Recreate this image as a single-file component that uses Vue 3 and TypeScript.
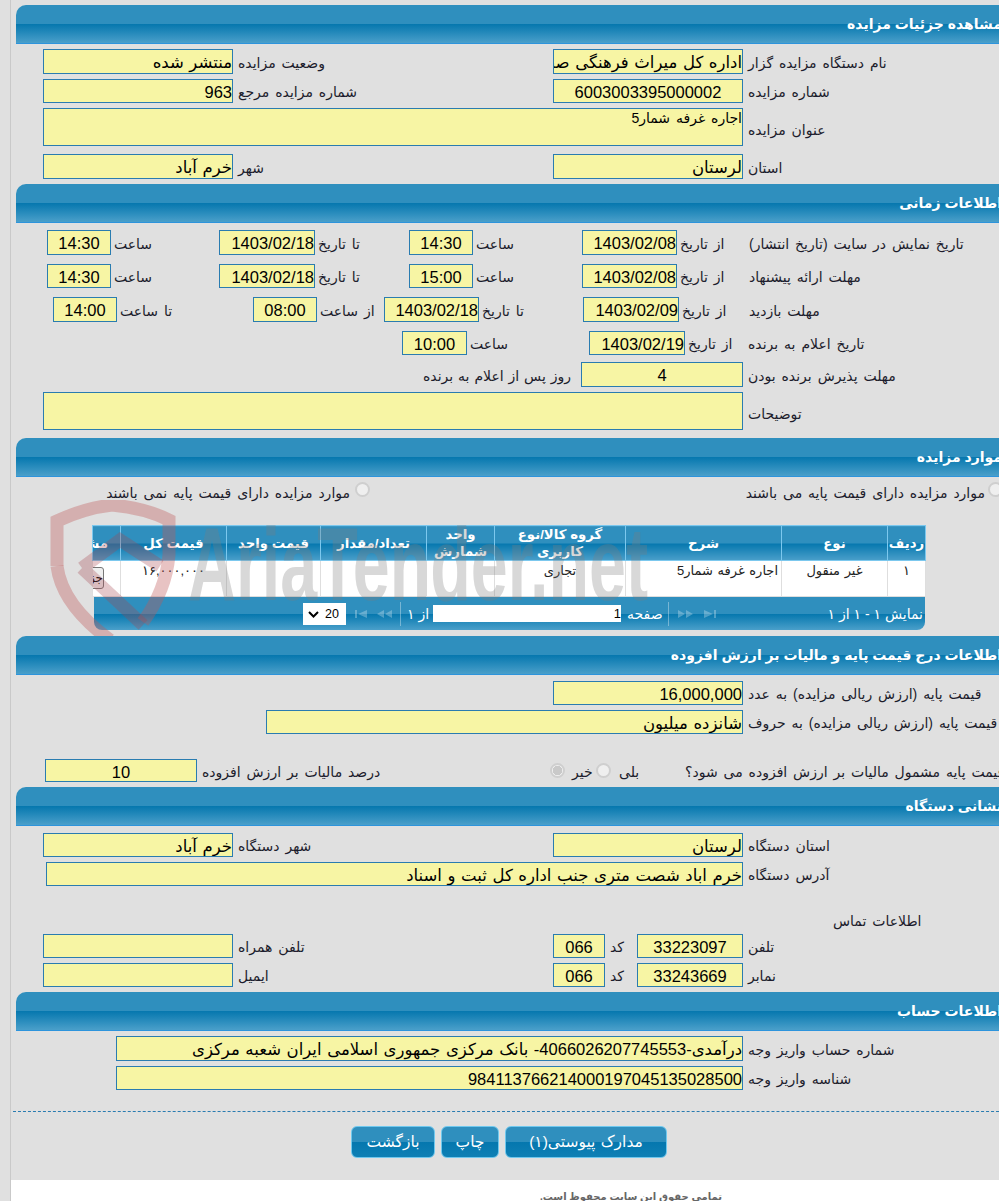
<script setup lang="ts">
const cols = [38, 106, 156, 131, 68, 106, 94, 106, 28]
const heads = ['ردیف', 'نوع', 'شرح', 'گروه کالا/نوع کاربری', 'واحد شمارش', 'تعداد/مقدار', 'قیمت واحد', 'قیمت کل', 'مشاهده']
</script>

<template>
  <div class="page">
    <div class="inner">
      <h2 class="bar">مشاهده جزئیات مزایده</h2>
      <div class="row g2 mt5 h25">
        <div class="f">منتشر شده</div><div class="lb lb5">وضعیت مزایده</div>
        <div class="f">اداره کل میراث فرهنگی  صنایع دستی و گردشگری لرستان</div><div class="lb lb5">نام دستگاه مزایده گزار</div>
      </div>
      <div class="row g2 mt5 h24">
        <div class="f">963</div><div class="lb lb5">شماره مزایده مرجع</div>
        <div class="f c">6003003395000002</div><div class="lb lb5">شماره مزایده</div>
      </div>
      <div class="row gw mt5 h38">
        <div class="f ta">اجاره غرفه شمار5</div><div class="lb lb5 low">عنوان مزایده</div>
      </div>
      <div class="row g2 mt8 h25">
        <div class="f">خرم آباد</div><div class="lb lb5">شهر</div>
        <div class="f">لرستان</div><div class="lb lb5">استان</div>
      </div>

      <h2 class="bar mt5">اطلاعات زمانی</h2>
      <div class="row ga mt7 h25">
        <div class="f c">14:30</div><div class="lb">ساعت</div>
        <div class="f">1403/02/18</div><div class="lb">تا تاریخ</div>
        <div class="f c">14:30</div><div class="lb">ساعت</div>
        <div class="f">1403/02/08</div><div class="lb">از تاریخ</div>
        <div class="lb">تاریخ نمایش در سایت (تاریخ انتشار)</div>
      </div>
      <div class="row ga mt9 h24">
        <div class="f c">14:30</div><div class="lb">ساعت</div>
        <div class="f">1403/02/18</div><div class="lb">تا تاریخ</div>
        <div class="f c">15:00</div><div class="lb">ساعت</div>
        <div class="f">1403/02/08</div><div class="lb">از تاریخ</div>
        <div class="lb">مهلت ارائه پیشنهاد</div>
      </div>
      <div class="row gb mt9 h25">
        <div class="f c">14:00</div><div class="lb">تا ساعت</div>
        <div class="f c">08:00</div><div class="lb">از ساعت</div>
        <div class="f">1403/02/18</div><div class="lb">تا تاریخ</div>
        <div class="f">1403/02/09</div><div class="lb">از تاریخ</div>
        <div class="lb">مهلت بازدید</div>
      </div>
      <div class="row gc mt9 h24">
        <div class="f c">10:00</div><div class="lb">ساعت</div>
        <div class="f">1403/02/19</div><div class="lb">از تاریخ</div>
        <div class="lb">تاریخ اعلام به برنده</div>
      </div>
      <div class="row gd mt7 h25">
        <div class="lb end">روز پس از اعلام به برنده</div>
        <div class="f c">4</div><div class="lb lb5">مهلت پذیرش برنده بودن</div>
      </div>
      <div class="row gw mt5 h38">
        <div class="f ta"></div><div class="lb lb5 low">توضیحات</div>
      </div>

      <h2 class="bar mt8">موارد مزایده</h2>
      <div class="opts">
        <label class="opt"><span class="lb ot1">موارد مزایده دارای قیمت پایه نمی باشند</span><input class="rd" type="radio" disabled /></label>
        <label class="opt"><span class="lb ot2">موارد مزایده دارای قیمت پایه می باشند</span><input class="rd" type="radio" disabled /></label>
      </div>

      <table class="grid" dir="rtl">
        <colgroup><col v-for="(w, i) in cols" :key="i" :width="w" /></colgroup>
        <thead>
          <tr><th v-for="h in heads" :key="h">{{ h }}</th></tr>
        </thead>
        <tbody>
          <tr>
            <td>۱</td>
            <td>غیر منقول</td>
            <td class="start">اجاره غرفه شمار5</td>
            <td>تجاری</td>
            <td></td>
            <td></td>
            <td></td>
            <td class="num">۱۶,۰۰۰,۰۰۰</td>
            <td class="clip"><button class="more" type="button">جزئیات</button></td>
          </tr>
        </tbody>
      </table>
      <div class="pager">
        <div class="size-box">
          <select class="size" dir="rtl"><option>20</option></select>
          <svg class="chev" width="11" height="7" viewBox="0 0 11 7"><path d="M1 1l4.5 4.5L10 1" /></svg>
        </div>
        <svg class="pi first" width="12" height="10" viewBox="0 0 12 10"><path d="M0 1h2v8H0zM12 1v8L3 5z" /></svg>
        <svg class="pi prev" width="15" height="10" viewBox="0 0 15 10"><path d="M7 1v8L0 5zM15 1v8L8 5z" /></svg>
        <span class="sep s1"></span>
        <span class="pt of">از ۱</span>
        <input class="page-no" dir="rtl" value="1" readonly />
        <span class="pt word">صفحه</span>
        <span class="sep s2"></span>
        <svg class="pi next" width="15" height="10" viewBox="0 0 15 10"><path d="M0 1v8l7-4zM8 1v8l7-4z" /></svg>
        <svg class="pi last" width="12" height="10" viewBox="0 0 12 10"><path d="M0 1v8l9-4zM10 1h2v8h-2z" /></svg>
        <span class="pt info">نمایش ۱ - ۱ از ۱</span>
      </div>

      <h2 class="bar mt6">اطلاعات درج قیمت پایه و مالیات بر ارزش افزوده</h2>
      <div class="row gf mt6 h24">
        <div class="f">16,000,000</div><div class="lb lb5">قیمت پایه (ارزش ریالی مزایده) به عدد</div>
      </div>
      <div class="row gg mt5 h24">
        <div class="f">شانزده میلیون</div><div class="lb lb5">قیمت پایه (ارزش ریالی مزایده) به حروف</div>
      </div>
      <div class="row gh mt25 h23">
        <div class="f c">10</div><div class="lb lb5">درصد مالیات بر ارزش افزوده</div>
        <input class="rd" type="radio" checked disabled /><div class="lb lb7">خیر</div>
        <input class="rd" type="radio" disabled /><div class="lb lb8">بلی</div>
        <div class="lb">قیمت پایه مشمول مالیات بر ارزش افزوده می شود؟</div>
      </div>

      <h2 class="bar mt5">نشانی دستگاه</h2>
      <div class="row g2 mt7 h24">
        <div class="f">خرم آباد</div><div class="lb lb5">شهر دستگاه</div>
        <div class="f">لرستان</div><div class="lb lb5">استان دستگاه</div>
      </div>
      <div class="row gi mt5 h24">
        <div class="f">خرم اباد شصت متری جنب اداره کل ثبت و اسناد</div><div class="lb lb5">آدرس دستگاه</div>
      </div>
      <div class="row gj mt24 h20"><div class="lb">اطلاعات تماس</div></div>
      <div class="row gk mt4 h24">
        <div class="f"></div><div class="lb lb5">تلفن همراه</div>
        <div class="f c">066</div><div class="lb lb5">کد</div>
        <div class="f c">33223097</div><div class="lb lb5">تلفن</div>
      </div>
      <div class="row gk mt5 h24">
        <div class="f"></div><div class="lb lb5">ایمیل</div>
        <div class="f c">066</div><div class="lb lb5">کد</div>
        <div class="f c">33243669</div><div class="lb lb5">نمابر</div>
      </div>

      <h2 class="bar mt5">اطلاعات حساب</h2>
      <div class="row gl mt5 h25">
        <div class="f">درآمدی-4066026207745553- بانک مرکزی جمهوری اسلامی ایران شعبه مرکزی</div><div class="lb lb5">شماره حساب واریز وجه</div>
      </div>
      <div class="row gl mt5 h24">
        <div class="f">984113766214000197045135028500</div><div class="lb lb5">شناسه واریز وجه</div>
      </div>

      <div class="dash"></div>
      <div class="btns">
        <button class="btn b1" type="button">بازگشت</button>
        <button class="btn b2" type="button">چاپ</button>
        <button class="btn b3" type="button">مدارک پیوستی(۱)</button>
      </div>
      <div class="foot">تمامی حقوق این سایت محفوظ است.</div>
    </div>

    <svg class="mark" width="630" height="136" viewBox="0 0 630 136" aria-hidden="true">
      <path class="sh" d="M27 66 V21 Q55 8 82 5 Q115 8 139 20 V55 Q136 90 113 122" />
      <path class="sh" d="M27 66 Q32 105 80 140" />
      <path class="vv" d="M52 68 L90 40 L130 66 M52 68 L113 125" />
      <text class="wm" x="158" y="100" textLength="460" lengthAdjust="spacingAndGlyphs">AriaTender.net</text>
    </svg>
  </div>
</template>

<style scoped>
.page {
  position: relative;
  width: 999px;
  height: 1201px;
  overflow: hidden;
  padding: 5px 0 0 10px;
  box-sizing: border-box;
  background: #e0e0e0;
  font-family: "Liberation Sans", "DejaVu Sans", sans-serif;
  color: #1c1c2c;
}
.inner {
  border-left: 1px solid #c9c9c9;
  padding-left: 5px;
  margin-top: -5px;
  padding-top: 5px;
  height: 1201px;
}
.bar {
  margin: 0 -20px 0 0;
  height: 39px;
  box-sizing: border-box;
  padding: 0 17px 0 0;
  direction: rtl;
  text-align: right;
  font-size: 14px;
  line-height: 38px;
  font-weight: bold;
  color: #fff;
  white-space: nowrap;
  border-top-left-radius: 10px;
  border-bottom: 1px solid #2d94dc;
  background: linear-gradient(#2f8fbe 0, #2f8fbe 19px, #0577ae 19px, #4a9fca 38px);
}
.row {
  display: grid;
  align-items: center;
}
.row > .f { height: 100%; }
.mt4 { margin-top: 4px; }
.mt5 { margin-top: 5px; }
.mt6 { margin-top: 6px; }
.mt7 { margin-top: 7px; }
.mt8 { margin-top: 8px; }
.mt9 { margin-top: 9px; }
.mt24 { margin-top: 24px; }
.mt25 { margin-top: 25px; }
.h20 { height: 20px; }
.h23 { height: 23px; }
.h24 { height: 24px; }
.h25 { height: 25px; }
.h38 { height: 38px; }

.g2 { padding-left: 27px; grid-template-columns: 190px 320px 190px 1fr; }
.gw { padding-left: 27px; grid-template-columns: 700px 1fr; }
.ga { padding-left: 31px; grid-template-columns: 64px 108px 96px 94px 64px 109px 95px 69px 1fr; }
.gb { padding-left: 37px; grid-template-columns: 64px 136px 64px 67px 95px 104px 96px 67px 1fr; }
.gc { padding-left: 386px; grid-template-columns: 65px 122px 96px 60px 1fr; }
.gd { padding-left: 27px; grid-template-columns: 538px 162px 1fr; }
.gf { padding-left: 537px; grid-template-columns: 190px 1fr; }
.gg { padding-left: 250px; grid-template-columns: 477px 1fr; }
.gh { padding-left: 29px; margin-right: -60px; grid-template-columns: 152px 353px 15px 31px 15px 71px 1fr; }
.gi { padding-left: 30px; grid-template-columns: 697px 1fr; }
.gj { padding-left: 814px; grid-template-columns: 1fr; }
.gk { padding-left: 27px; grid-template-columns: 190px 320px 52px 32px 106px 1fr; }
.gl { padding-left: 100px; grid-template-columns: 627px 1fr; }

.f {
  box-sizing: border-box;
  min-width: 0;
  overflow: hidden;
  border: 1px solid #2a7cb0;
  background: #f7f5a4;
  direction: rtl;
  text-align: right;
  white-space: pre;
  font-size: 16.5px;
  word-spacing: 1px;
  line-height: 24px;
  color: #000;
}
.f.c { text-align: center; }
.f.ta { font-size: 14px; word-spacing: 2px; line-height: 18px; white-space: normal; }
.lb {
  display: block;
  min-width: 0;
  padding-left: 3px;
  direction: rtl;
  text-align: left;
  white-space: nowrap;
  font-size: 14px;
  word-spacing: 2px;
  line-height: 20px;
  position: relative;
  top: 1px;
}
.lb5 { padding-left: 5px; }
.lb7 { padding-left: 7px; }
.lb8 { padding-left: 8px; }
.low { top: 3px; }
.lb.end { text-align: right; padding: 0 10px 0 0; word-spacing: 1px; }

.opts {
  display: flex;
  height: 20px;
  margin-top: 5px;
  padding-left: 85px;
}
.opt {
  display: flex;
  align-items: flex-start;
  line-height: 20px;
  flex: none;
}
.opt:first-child { width: 640px; }
.ot1 { width: 251px; box-sizing: border-box; padding: 0 2px 0 0; text-align: right; }
.ot2 { width: 244px; box-sizing: border-box; padding: 0; text-align: right; }
.rd {
  appearance: none;
  box-sizing: border-box;
  flex: none;
  width: 15px;
  height: 15px;
  margin: 0 0 0 3px;
  border: 2px solid #cfcfcf;
  border-radius: 50%;
  background: #efefef;
}
.row > .rd { margin: 0; }
.rd:checked { background: radial-gradient(circle, #c9c9c9 0 4.5px, #efefef 5px); }

.grid {
  display: table;
  table-layout: fixed;
  border-collapse: collapse;
  width: 833px;
  margin: 23px 0 0 76px;
  border: 1px solid #8acbea;
  background: #fff;
}
.grid th {
  box-sizing: border-box;
  height: 35px;
  padding: 0;
  overflow: hidden;
  white-space: normal;
  font-size: 13.3px;
  line-height: 17px;
  color: #fff;
  border: 1px solid #7cc8ee;
  background: linear-gradient(#2f8fbe 0, #2f8fbe 17px, #0577ae 17px, #4a9fca 34px);
}
.grid th:last-child { white-space: nowrap; text-align: right; padding-right: 12px; }
.grid td {
  box-sizing: border-box;
  height: 36px;
  padding: 2px 0 0;
  vertical-align: top;
  text-align: center;
  font-size: 13px;
  word-spacing: 1px;
  line-height: 16px;
  border: 1px solid #dedede;
  color: #222;
}
.grid td.start { text-align: right; padding-right: 3px; }
.grid td.num { letter-spacing: 0.8px; }
.grid td.clip { overflow: hidden; padding: 6px 16px 0 0; }
.more {
  display: block;
  width: 50px;
  height: 22px;
  padding: 0;
  font: 12px "Liberation Sans", "DejaVu Sans", sans-serif;
  text-align: right;
  background: #efefef;
  border: 1px solid #777;
  border-radius: 3px;
}

.pager {
  display: flex;
  align-items: center;
  width: 831px;
  height: 33px;
  margin-left: 78px;
  box-sizing: border-box;
  padding-left: 209px;
  border-radius: 0 0 8px 8px;
  background: linear-gradient(#2f8fbe 0, #2f8fbe 17px, #0577ae 17px, #4a9fca 33px);
  color: #fff;
  font-size: 14px;
}
.size-box {
  position: relative;
  flex: none;
  width: 43px;
  height: 22px;
}
.size {
  appearance: none;
  display: block;
  box-sizing: border-box;
  width: 43px;
  height: 22px;
  border: 0;
  border-radius: 0;
  padding: 0 7px 0 0;
  background: #fff;
  font: 12.5px "Liberation Sans", sans-serif;
  color: #000;
}
.chev {
  position: absolute;
  left: 5px;
  top: 8px;
  fill: none;
  stroke: #000;
  stroke-width: 2;
}
.pi { flex: none; fill: rgba(255, 255, 255, 0.28); }
.first { margin-left: 9px; }
.prev { margin-left: 10px; }
.sep { flex: none; width: 1px; height: 24px; background: rgba(255, 255, 255, 0.35); }
.s1 { margin-left: 8px; }
.pt { direction: rtl; white-space: nowrap; }
.of { margin-left: 6px; }
.page-no {
  box-sizing: border-box;
  width: 188px;
  height: 17px;
  margin-left: 4px;
  padding: 0;
  border: 0;
  background: #fff;
  color: #000;
  font: 13px "Liberation Sans", sans-serif;
}
.word { margin-left: 6px; }
.s2 { margin-left: 5px; }
.next { margin-left: 9px; }
.last { margin-left: 11px; }
.info { margin-left: 112px; }

.dash {
  margin: 21px -20px 0 -3px;
  border-top: 1px dashed #2a7cb0;
}
.btns {
  display: flex;
  gap: 6px;
  margin: 14px 0 0 335px;
}
.btn {
  box-sizing: border-box;
  height: 32px;
  padding: 0;
  direction: rtl;
  border: 1px solid #6fc8ee;
  border-radius: 6px;
  color: #fff;
  font: 15.5px "Liberation Sans", "DejaVu Sans", sans-serif;
  word-spacing: 1px;
  background: linear-gradient(#2f8fbe 0, #2f8fbe 15px, #0577ae 15px, #0f80b5 100%);
}
.b1 { width: 84px; }
.b2 { width: 58px; }
.b3 { width: 162px; }

.foot {
  margin: 22px -20px 0 -5px;
  height: 40px;
  background: #fff;
  direction: rtl;
  text-align: right;
  padding: 11px 297px 0 0;
  font-size: 10px;
  font-weight: bold;
  color: #666;
}
.mark {
  position: absolute;
  left: 30px;
  top: 500px;
  pointer-events: none;
}
.sh { fill: none; stroke: rgba(190, 90, 90, 0.36); stroke-width: 13; }
.vv { fill: none; stroke: rgba(165, 70, 80, 0.3); stroke-width: 13; }
.wm {
  font: bold 104px "Liberation Sans", sans-serif;
  fill: rgba(125, 125, 125, 0.3);
}
</style>

<style>
html, body { margin: 0; background: #e0e0e0; }
</style>
